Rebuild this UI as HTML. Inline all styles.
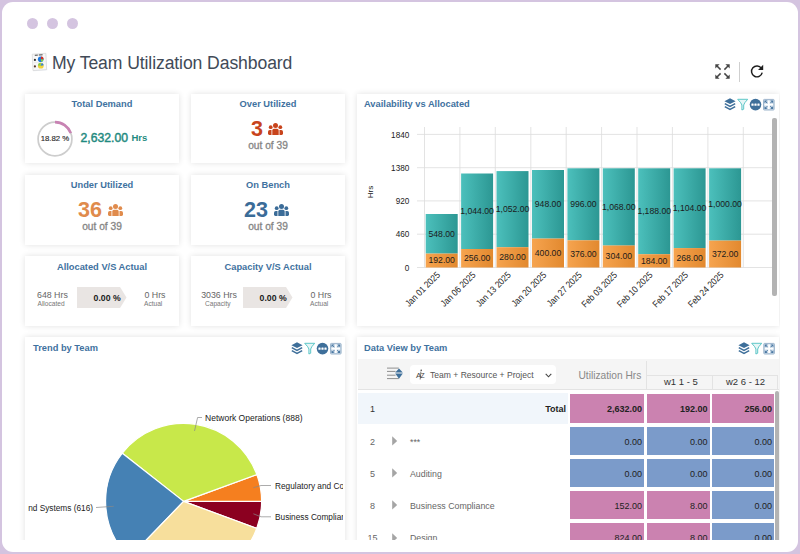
<!DOCTYPE html>
<html><head><meta charset="utf-8">
<style>
*{margin:0;padding:0;box-sizing:border-box}
html,body{width:800px;height:554px;overflow:hidden;background:#d4c4e0;font-family:"Liberation Sans",sans-serif;position:relative}
#win{position:absolute;left:2px;top:2px;width:796px;height:550px;background:#fff;border-radius:11px}
.dot{position:absolute;width:11px;height:11px;border-radius:50%;background:#d4c4e0;top:18px}
.title{position:absolute;left:52px;top:52.5px;font-size:17.6px;color:#414a57;white-space:nowrap;line-height:20px;letter-spacing:-0.1px}
.card{position:absolute;background:#fff;box-shadow:0 0 6px rgba(0,0,0,0.12)}
.ct{position:absolute;left:0;right:0;text-align:center;font-size:9.3px;font-weight:bold;color:#3f72a0;white-space:nowrap;line-height:11px}
.big{position:absolute;font-weight:bold;white-space:nowrap;line-height:1}
.outof{position:absolute;left:0;right:0;text-align:center;font-size:10.2px;color:#858585;line-height:11px;-webkit-text-stroke:0.3px #858585}
.pt{position:absolute;font-size:9.3px;font-weight:bold;color:#3f72a0;white-space:nowrap;line-height:11px}
.t{position:absolute;white-space:nowrap;line-height:1}
svg{position:absolute;overflow:visible}
</style></head><body>
<div id="win"></div>
<div class="dot" style="left:27px"></div>
<div class="dot" style="left:47px"></div>
<div class="dot" style="left:67px"></div>
<svg style="left:30px;top:52px" width="20" height="22" viewBox="30 52 20 22">
  <path d="M32.6 54.6 L46.2 53.6 L47.2 70.2 L33.4 71.2 Z" fill="#dfe6ee" opacity="0.7"/>
  <path d="M32.2 54.2 L45.8 53.3 L46.6 69.6 L33 70.6 Z" fill="#f7f7f7" stroke="#d2d2d2" stroke-width="0.6"/>
  <path d="M34.8 55.3 L37.8 55.1 M38.8 55 L42.6 54.8" stroke="#444" stroke-width="1"/>
  <path d="M33.6 62.6 L45.6 61.8" stroke="#e4e4e4" stroke-width="0.6"/>
  <circle cx="40.7" cy="59.2" r="2.8" fill="#1f7be0"/>
  <path d="M40.7 59.2 L41.2 56.45 A2.8 2.8 0 0 1 43.5 59.6 Z" fill="#e02a1a"/>
  <path d="M40.7 59.2 L43.5 59.6 A2.8 2.8 0 0 1 41.4 61.9 Z" fill="#8bd43a"/>
  <circle cx="40.8" cy="65.7" r="2.9" fill="#f3d23a"/>
  <path d="M40.8 65.7 L37.9 65.5 A2.9 2.9 0 0 1 40.6 62.8 Z" fill="#7fcf4a"/>
  <path d="M40.8 65.7 L41.6 62.9 A2.9 2.9 0 0 1 43.7 65.3 Z" fill="#2a7fe0"/>
  <circle cx="34.9" cy="59.9" r="1.1" fill="#333"/>
  <circle cx="34.9" cy="66.4" r="1.1" fill="#5a3a2a"/>
</svg>
<div class="title">My Team Utilization Dashboard</div>
<svg style="left:714.5px;top:63.5px" width="15" height="15" viewBox="0 0 15 15"><g fill="#454545" stroke="#454545">
    <path d="M0.3 0.3 L4.6 0.3 L0.3 4.6 Z" stroke="none"/><path d="M1.5 1.5 L5.6 5.6" stroke-width="1.5" fill="none"/>
    <path d="M14.7 0.3 L10.4 0.3 L14.7 4.6 Z" stroke="none"/><path d="M13.5 1.5 L9.4 5.6" stroke-width="1.5" fill="none"/>
    <path d="M0.3 14.7 L4.6 14.7 L0.3 10.4 Z" stroke="none"/><path d="M1.5 13.5 L5.6 9.4" stroke-width="1.5" fill="none"/>
    <path d="M14.7 14.7 L10.4 14.7 L14.7 10.4 Z" stroke="none"/><path d="M13.5 13.5 L9.4 9.4" stroke-width="1.5" fill="none"/></g></svg>
<div style="position:absolute;left:739px;top:62px;width:1px;height:20px;background:#cfcfcf"></div>
<svg style="left:750px;top:64px" width="14" height="14" viewBox="0 0 14 14">
  <path d="M11.4 4.4 A5.4 5.4 0 1 0 12.2 8.6" fill="none" stroke="#1e1e1e" stroke-width="1.45"/>
  <path d="M13.2 0.8 L13.2 6 L8 6 Z" fill="#1e1e1e"/></svg>
<div style="position:absolute;left:0;top:0;width:800px;height:554px;clip-path:inset(0 20px 0 0)">
<div class="card" style="left:25px;top:94px;width:154px;height:69px"></div>
<div class="ct" style="left:25px;width:154px;top:99px">Total Demand</div>
<svg style="left:37px;top:121px" width="36" height="36" viewBox="0 0 36 36">
    <circle cx="18" cy="18" r="16.9" fill="none" stroke="#cdcdcd" stroke-width="1.7"/>
    <path d="M18 1.1 A16.9 16.9 0 0 1 33.8 12.1" fill="none" stroke="#c883b3" stroke-width="2.6"/></svg>
<div class="t" style="left:37px;top:135px;width:36px;text-align:center;font-size:7.8px;color:#2a2a2a;-webkit-text-stroke:0.15px #2a2a2a">18.82 %</div>
<div class="t" style="left:80.5px;top:132px;font-size:12.2px;color:#1f8a80;-webkit-text-stroke:0.45px #1f8a80">2,632.00</div>
<div class="big" style="left:131.5px;top:132.6px;font-size:9.5px;color:#1f8a80">Hrs</div>
<div class="card" style="left:191px;top:94px;width:154px;height:69px"></div>
<div class="ct" style="left:191px;width:154px;top:99px">Over Utilized</div>
<div class="big" style="left:250.5px;top:117.1px;font-size:22.7px;color:#c8441c;transform:scaleX(0.95);transform-origin:left top">3</div>
<svg style="left:267.9px;top:123.2px" width="15" height="12" viewBox="0 0 15 12"><g fill="#c8441c"><circle cx="7.5" cy="2.5" r="2.5"/><path d="M4.3 12 L4.3 7.6 Q4.3 5.7 6 5.7 L9 5.7 Q10.7 5.7 10.7 7.6 L10.7 12 Z"/><circle cx="2.7" cy="4.2" r="1.9"/><path d="M3.5 12 L1.3 12 Q0 12 0 10.6 L0 8.6 Q0 6.9 1.8 6.9 L3.5 6.9 Z"/><circle cx="12.3" cy="4.2" r="1.9"/><path d="M11.5 12 L13.7 12 Q15 12 15 10.6 L15 8.6 Q15 6.9 13.2 6.9 L11.5 6.9 Z"/></g></svg>
<div class="outof" style="left:191px;width:154px;top:140px">out of 39</div>
<div class="card" style="left:25px;top:175px;width:154px;height:70px"></div>
<div class="ct" style="left:25px;width:154px;top:180px">Under Utilized</div>
<div class="big" style="left:78.3px;top:197.9px;font-size:22.7px;color:#e08b4c;transform:scaleX(0.95);transform-origin:left top">36</div>
<svg style="left:108px;top:204.2px" width="15" height="12" viewBox="0 0 15 12"><g fill="#e08b4c"><circle cx="7.5" cy="2.5" r="2.5"/><path d="M4.3 12 L4.3 7.6 Q4.3 5.7 6 5.7 L9 5.7 Q10.7 5.7 10.7 7.6 L10.7 12 Z"/><circle cx="2.7" cy="4.2" r="1.9"/><path d="M3.5 12 L1.3 12 Q0 12 0 10.6 L0 8.6 Q0 6.9 1.8 6.9 L3.5 6.9 Z"/><circle cx="12.3" cy="4.2" r="1.9"/><path d="M11.5 12 L13.7 12 Q15 12 15 10.6 L15 8.6 Q15 6.9 13.2 6.9 L11.5 6.9 Z"/></g></svg>
<div class="outof" style="left:25px;width:154px;top:221px">out of 39</div>
<div class="card" style="left:191px;top:175px;width:154px;height:70px"></div>
<div class="ct" style="left:191px;width:154px;top:180px">On Bench</div>
<div class="big" style="left:244.3px;top:197.9px;font-size:22.7px;color:#3b6c98;transform:scaleX(0.95);transform-origin:left top">23</div>
<svg style="left:274px;top:204.2px" width="15" height="12" viewBox="0 0 15 12"><g fill="#3b6c98"><circle cx="7.5" cy="2.5" r="2.5"/><path d="M4.3 12 L4.3 7.6 Q4.3 5.7 6 5.7 L9 5.7 Q10.7 5.7 10.7 7.6 L10.7 12 Z"/><circle cx="2.7" cy="4.2" r="1.9"/><path d="M3.5 12 L1.3 12 Q0 12 0 10.6 L0 8.6 Q0 6.9 1.8 6.9 L3.5 6.9 Z"/><circle cx="12.3" cy="4.2" r="1.9"/><path d="M11.5 12 L13.7 12 Q15 12 15 10.6 L15 8.6 Q15 6.9 13.2 6.9 L11.5 6.9 Z"/></g></svg>
<div class="outof" style="left:191px;width:154px;top:221px">out of 39</div>
<div class="card" style="left:25px;top:256px;width:154px;height:70px"></div>
<div class="ct" style="left:25px;width:154px;top:262px">Allocated V/S Actual</div>
<div class="t" style="left:37px;top:291px;font-size:8.8px;color:#666">648 Hrs</div>
<div class="t" style="left:37.5px;top:301px;font-size:6.6px;color:#777">Allocated</div>
<svg style="left:77px;top:287px" width="50" height="21" viewBox="0 0 50 21"><path d="M0 0 L43 0 L49.5 10.5 L43 21 L0 21 Z" fill="#e9e5e3"/></svg>
<div class="big" style="left:93.6px;top:293.8px;font-size:8.7px;color:#1a1a1a">0.00 %</div>
<div class="t" style="left:144.5px;top:291px;font-size:8.8px;color:#666">0 Hrs</div>
<div class="t" style="left:144px;top:301px;font-size:6.6px;color:#777">Actual</div>
<div class="card" style="left:191px;top:256px;width:154px;height:70px"></div>
<div class="ct" style="left:191px;width:154px;top:262px">Capacity V/S Actual</div>
<div class="t" style="left:201.2px;top:291px;font-size:8.8px;color:#666">3036 Hrs</div>
<div class="t" style="left:205.0px;top:301px;font-size:6.6px;color:#777">Capacity</div>
<svg style="left:243px;top:287px" width="50" height="21" viewBox="0 0 50 21"><path d="M0 0 L43 0 L49.5 10.5 L43 21 L0 21 Z" fill="#e9e5e3"/></svg>
<div class="big" style="left:259.6px;top:293.8px;font-size:8.7px;color:#1a1a1a">0.00 %</div>
<div class="t" style="left:310.5px;top:291px;font-size:8.8px;color:#666">0 Hrs</div>
<div class="t" style="left:310px;top:301px;font-size:6.6px;color:#777">Actual</div>
<div class="card" style="left:357px;top:94px;width:422px;height:232px"></div>
<div class="pt" style="left:364px;top:98.5px">Availability vs Allocated</div>
<svg style="left:724px;top:98px" width="52" height="14" viewBox="0 0 52 14"><path d="M6 0.3 L11.6 3.2 L6 6.1 L0.4 3.2 Z" fill="#3e6f9a"/><path d="M0.8 5.6 L6 8.3 L11.2 5.6" fill="none" stroke="#3e6f9a" stroke-width="1.5"/><path d="M0.8 8.6 L6 11.3 L11.2 8.6" fill="none" stroke="#3e6f9a" stroke-width="1.5"/><path d="M13.7 1.3 L23.7 1.3 Q20 5.2 19.7 7 L19.7 11.2 L17.9 12 L17.9 7 Q17.5 5.2 13.7 1.3 Z" fill="#e6f6f6" stroke="#55c3c4" stroke-width="0.95" stroke-linejoin="round"/><circle cx="31.5" cy="6.6" r="5.8" fill="#3e6f9a"/><rect x="27.4" y="5.5" width="2.2" height="2.2" rx="0.5" fill="#fff"/><rect x="30.4" y="5.5" width="2.2" height="2.2" rx="0.5" fill="#fff"/><rect x="33.4" y="5.5" width="2.2" height="2.2" rx="0.5" fill="#fff"/><g transform="translate(39,0.9)"><rect x="0.5" y="0.5" width="10.6" height="10.6" rx="0.8" fill="#cbdae8" stroke="#9db5cc" stroke-width="1"/><g fill="#4a78a2"><path d="M1.5 1.5 L4.3 1.5 L1.5 4.3 Z"/><path d="M10.1 1.5 L7.3 1.5 L10.1 4.3 Z"/><path d="M1.5 10.1 L4.3 10.1 L1.5 7.3 Z"/><path d="M10.1 10.1 L7.3 10.1 L10.1 7.3 Z"/></g><path d="M2.3 2.3 L4.4 4.4 M9.3 2.3 L7.2 4.4 M2.3 9.3 L4.4 7.2 M9.3 9.3 L7.2 7.2" stroke="#4a78a2" stroke-width="1"/><path d="M5.8 1.6 L5.8 10 M1.6 5.8 L10 5.8" stroke="#fff" stroke-width="1.8"/></g></svg>
<svg style="left:0;top:0" width="800" height="554" viewBox="0 0 800 554"><defs><linearGradient id="gt" x1="0" x2="1" y1="0" y2="0"><stop offset="0" stop-color="#4cc0bc"/><stop offset="1" stop-color="#2c9793"/></linearGradient><linearGradient id="go" x1="0" x2="1" y1="0" y2="0"><stop offset="0" stop-color="#f6a44f"/><stop offset="1" stop-color="#e2892f"/></linearGradient></defs><line x1="417" x2="774" y1="267.5" y2="267.5" stroke="#dcdcdc" stroke-width="0.8"/><text transform="translate(409.3,270.6) scale(0.9,1)" text-anchor="end" font-size="9.1" fill="#222">0</text><line x1="417" x2="774" y1="234.2" y2="234.2" stroke="#dcdcdc" stroke-width="0.8"/><text transform="translate(409.3,237.3) scale(0.9,1)" text-anchor="end" font-size="9.1" fill="#222">460</text><line x1="417" x2="774" y1="200.9" y2="200.9" stroke="#dcdcdc" stroke-width="0.8"/><text transform="translate(409.3,204.0) scale(0.9,1)" text-anchor="end" font-size="9.1" fill="#222">920</text><line x1="417" x2="774" y1="167.7" y2="167.7" stroke="#dcdcdc" stroke-width="0.8"/><text transform="translate(409.3,170.8) scale(0.9,1)" text-anchor="end" font-size="9.1" fill="#222">1380</text><line x1="417" x2="774" y1="134.4" y2="134.4" stroke="#dcdcdc" stroke-width="0.8"/><text transform="translate(409.3,137.5) scale(0.9,1)" text-anchor="end" font-size="9.1" fill="#222">1840</text><line x1="424.5" x2="424.5" y1="127" y2="267.5" stroke="#dcdcdc" stroke-width="0.8"/><line x1="459.9" x2="459.9" y1="127" y2="267.5" stroke="#dcdcdc" stroke-width="0.8"/><line x1="495.3" x2="495.3" y1="127" y2="267.5" stroke="#dcdcdc" stroke-width="0.8"/><line x1="530.8" x2="530.8" y1="127" y2="267.5" stroke="#dcdcdc" stroke-width="0.8"/><line x1="566.2" x2="566.2" y1="127" y2="267.5" stroke="#dcdcdc" stroke-width="0.8"/><line x1="601.6" x2="601.6" y1="127" y2="267.5" stroke="#dcdcdc" stroke-width="0.8"/><line x1="637.0" x2="637.0" y1="127" y2="267.5" stroke="#dcdcdc" stroke-width="0.8"/><line x1="672.4" x2="672.4" y1="127" y2="267.5" stroke="#dcdcdc" stroke-width="0.8"/><line x1="707.9" x2="707.9" y1="127" y2="267.5" stroke="#dcdcdc" stroke-width="0.8"/><line x1="743.3" x2="743.3" y1="127" y2="267.5" stroke="#dcdcdc" stroke-width="0.8"/><rect x="425.7" y="214.0" width="32" height="39.6" fill="url(#gt)"/><rect x="425.7" y="253.6" width="32" height="13.9" fill="url(#go)"/><text transform="translate(441.7,236.6) scale(0.95,1)" text-anchor="middle" font-size="9.1" fill="#1b1b1b">548.00</text><text transform="translate(441.7,263.4) scale(0.95,1)" text-anchor="middle" font-size="9.1" fill="#1b1b1b">192.00</text><text transform="translate(440.7,275.5) rotate(-45) scale(0.88,1)" text-anchor="end" font-size="9.3" fill="#222">Jan 01 2025</text><rect x="461.1" y="173.5" width="32" height="75.5" fill="url(#gt)"/><rect x="461.1" y="249.0" width="32" height="18.5" fill="url(#go)"/><text transform="translate(477.1,214.0) scale(0.95,1)" text-anchor="middle" font-size="9.1" fill="#1b1b1b">1,044.00</text><text transform="translate(477.1,261.0) scale(0.95,1)" text-anchor="middle" font-size="9.1" fill="#1b1b1b">256.00</text><text transform="translate(476.1,275.5) rotate(-45) scale(0.88,1)" text-anchor="end" font-size="9.3" fill="#222">Jan 06 2025</text><rect x="496.5" y="171.1" width="32" height="76.1" fill="url(#gt)"/><rect x="496.5" y="247.2" width="32" height="20.3" fill="url(#go)"/><text transform="translate(512.5,212.0) scale(0.95,1)" text-anchor="middle" font-size="9.1" fill="#1b1b1b">1,052.00</text><text transform="translate(512.5,260.2) scale(0.95,1)" text-anchor="middle" font-size="9.1" fill="#1b1b1b">280.00</text><text transform="translate(511.5,275.5) rotate(-45) scale(0.88,1)" text-anchor="end" font-size="9.3" fill="#222">Jan 13 2025</text><rect x="532.0" y="170.0" width="32" height="68.6" fill="url(#gt)"/><rect x="532.0" y="238.6" width="32" height="28.9" fill="url(#go)"/><text transform="translate(548.0,207.1) scale(0.95,1)" text-anchor="middle" font-size="9.1" fill="#1b1b1b">948.00</text><text transform="translate(548.0,255.8) scale(0.95,1)" text-anchor="middle" font-size="9.1" fill="#1b1b1b">400.00</text><text transform="translate(547.0,275.5) rotate(-45) scale(0.88,1)" text-anchor="end" font-size="9.3" fill="#222">Jan 20 2025</text><rect x="567.4" y="168.3" width="32" height="72.0" fill="url(#gt)"/><rect x="567.4" y="240.3" width="32" height="27.2" fill="url(#go)"/><text transform="translate(583.4,207.1) scale(0.95,1)" text-anchor="middle" font-size="9.1" fill="#1b1b1b">996.00</text><text transform="translate(583.4,256.7) scale(0.95,1)" text-anchor="middle" font-size="9.1" fill="#1b1b1b">376.00</text><text transform="translate(582.4,275.5) rotate(-45) scale(0.88,1)" text-anchor="end" font-size="9.3" fill="#222">Jan 27 2025</text><rect x="602.8" y="168.3" width="32" height="77.3" fill="url(#gt)"/><rect x="602.8" y="245.5" width="32" height="22.0" fill="url(#go)"/><text transform="translate(618.8,209.7) scale(0.95,1)" text-anchor="middle" font-size="9.1" fill="#1b1b1b">1,068.00</text><text transform="translate(618.8,259.3) scale(0.95,1)" text-anchor="middle" font-size="9.1" fill="#1b1b1b">304.00</text><text transform="translate(617.8,275.5) rotate(-45) scale(0.88,1)" text-anchor="end" font-size="9.3" fill="#222">Feb 03 2025</text><rect x="638.2" y="168.3" width="32" height="85.9" fill="url(#gt)"/><rect x="638.2" y="254.2" width="32" height="13.3" fill="url(#go)"/><text transform="translate(654.2,214.0) scale(0.95,1)" text-anchor="middle" font-size="9.1" fill="#1b1b1b">1,188.00</text><text transform="translate(654.2,263.6) scale(0.95,1)" text-anchor="middle" font-size="9.1" fill="#1b1b1b">184.00</text><text transform="translate(653.2,275.5) rotate(-45) scale(0.88,1)" text-anchor="end" font-size="9.3" fill="#222">Feb 10 2025</text><rect x="673.6" y="168.3" width="32" height="79.9" fill="url(#gt)"/><rect x="673.6" y="248.1" width="32" height="19.4" fill="url(#go)"/><text transform="translate(689.6,211.0) scale(0.95,1)" text-anchor="middle" font-size="9.1" fill="#1b1b1b">1,104.00</text><text transform="translate(689.6,260.6) scale(0.95,1)" text-anchor="middle" font-size="9.1" fill="#1b1b1b">268.00</text><text transform="translate(688.6,275.5) rotate(-45) scale(0.88,1)" text-anchor="end" font-size="9.3" fill="#222">Feb 17 2025</text><rect x="709.1" y="168.3" width="32" height="72.3" fill="url(#gt)"/><rect x="709.1" y="240.6" width="32" height="26.9" fill="url(#go)"/><text transform="translate(725.1,207.2) scale(0.95,1)" text-anchor="middle" font-size="9.1" fill="#1b1b1b">1,000.00</text><text transform="translate(725.1,256.8) scale(0.95,1)" text-anchor="middle" font-size="9.1" fill="#1b1b1b">372.00</text><text transform="translate(724.1,275.5) rotate(-45) scale(0.88,1)" text-anchor="end" font-size="9.3" fill="#222">Feb 24 2025</text><text transform="translate(373,192) rotate(-90)" text-anchor="middle" font-size="8" fill="#222">Hrs</text></svg>
<div style="position:absolute;left:772px;top:118px;width:4.5px;height:178px;background:#b3b3b3;border-radius:2px"></div>
<div style="position:absolute;left:0;top:0;width:800px;height:554px;clip-path:inset(0 0 14px 0)">
<div class="card" style="left:25px;top:337px;width:320px;height:230px"></div>
<div class="pt" style="left:33px;top:343.3px">Trend by Team</div>
<svg style="left:291px;top:342px" width="52" height="14" viewBox="0 0 52 14"><path d="M6 0.3 L11.6 3.2 L6 6.1 L0.4 3.2 Z" fill="#3e6f9a"/><path d="M0.8 5.6 L6 8.3 L11.2 5.6" fill="none" stroke="#3e6f9a" stroke-width="1.5"/><path d="M0.8 8.6 L6 11.3 L11.2 8.6" fill="none" stroke="#3e6f9a" stroke-width="1.5"/><path d="M13.7 1.3 L23.7 1.3 Q20 5.2 19.7 7 L19.7 11.2 L17.9 12 L17.9 7 Q17.5 5.2 13.7 1.3 Z" fill="#e6f6f6" stroke="#55c3c4" stroke-width="0.95" stroke-linejoin="round"/><circle cx="31.5" cy="6.6" r="5.8" fill="#3e6f9a"/><rect x="27.4" y="5.5" width="2.2" height="2.2" rx="0.5" fill="#fff"/><rect x="30.4" y="5.5" width="2.2" height="2.2" rx="0.5" fill="#fff"/><rect x="33.4" y="5.5" width="2.2" height="2.2" rx="0.5" fill="#fff"/><g transform="translate(39,0.9)"><rect x="0.5" y="0.5" width="10.6" height="10.6" rx="0.8" fill="#cbdae8" stroke="#9db5cc" stroke-width="1"/><g fill="#4a78a2"><path d="M1.5 1.5 L4.3 1.5 L1.5 4.3 Z"/><path d="M10.1 1.5 L7.3 1.5 L10.1 4.3 Z"/><path d="M1.5 10.1 L4.3 10.1 L1.5 7.3 Z"/><path d="M10.1 10.1 L7.3 10.1 L10.1 7.3 Z"/></g><path d="M2.3 2.3 L4.4 4.4 M9.3 2.3 L7.2 4.4 M2.3 9.3 L4.4 7.2 M9.3 9.3 L7.2 7.2" stroke="#4a78a2" stroke-width="1"/><path d="M5.8 1.6 L5.8 10 M1.6 5.8 L10 5.8" stroke="#fff" stroke-width="1.8"/></g></svg>
<div style="position:absolute;left:0;top:0;width:800px;height:554px;clip-path:inset(0 457px 0 28px)">
<svg style="left:0;top:0" width="800" height="554" viewBox="0 0 800 554"><path d="M183.6 501.4 L256.80 528.33 A78 78 0 0 0 261.60 501.40 Z" fill="#8b0020" stroke="#fff" stroke-width="1.2" stroke-linejoin="round"/><path d="M183.6 501.4 L261.60 501.40 A78 78 0 0 0 256.85 474.59 Z" fill="#f57f1f" stroke="#fff" stroke-width="1.2" stroke-linejoin="round"/><path d="M183.6 501.4 L256.85 474.59 A78 78 0 0 0 122.30 453.16 Z" fill="#c8e84a" stroke="#fff" stroke-width="1.2" stroke-linejoin="round"/><path d="M183.6 501.4 L122.30 453.16 A78 78 0 0 0 129.42 557.51 Z" fill="#4581b4" stroke="#fff" stroke-width="1.2" stroke-linejoin="round"/><path d="M183.6 501.4 L129.42 557.51 A78 78 0 0 0 256.80 528.33 Z" fill="#f7df9c" stroke="#fff" stroke-width="1.2" stroke-linejoin="round"/><path d="M194.5 431 L197.6 417.5 L202 417.5" fill="none" stroke="#888" stroke-width="0.7"/><path d="M253.4 487.7 L261 485.5 L271 485.5" fill="none" stroke="#888" stroke-width="0.7"/><path d="M253.4 513.8 L261 516.8 L271 516.8" fill="none" stroke="#888" stroke-width="0.7"/><path d="M113.7 506.3 L96 507.5" fill="none" stroke="#888" stroke-width="0.7"/><g font-size="9.2" fill="#222"><text x="205" y="421.3" textLength="97.5" lengthAdjust="spacingAndGlyphs">Network Operations (888)</text><text transform="translate(275,488.6) scale(0.9,1)">Regulatory and Compliance (144)</text><text transform="translate(275,520.2) scale(0.9,1)">Business Compliance (152)</text><text transform="translate(93,510.7) scale(0.9,1)" text-anchor="end">Backend Systems (616)</text></g></svg>
</div>
<div class="card" style="left:357px;top:337px;width:422px;height:230px"></div>
<div class="pt" style="left:364px;top:343.3px">Data View by Team</div>
<svg style="left:738.3px;top:342px" width="52" height="14" viewBox="0 0 52 14"><path d="M6 0.3 L11.6 3.2 L6 6.1 L0.4 3.2 Z" fill="#3e6f9a"/><path d="M0.8 5.6 L6 8.3 L11.2 5.6" fill="none" stroke="#3e6f9a" stroke-width="1.5"/><path d="M0.8 8.6 L6 11.3 L11.2 8.6" fill="none" stroke="#3e6f9a" stroke-width="1.5"/><path d="M13.7 1.3 L23.7 1.3 Q20 5.2 19.7 7 L19.7 11.2 L17.9 12 L17.9 7 Q17.5 5.2 13.7 1.3 Z" fill="#e6f6f6" stroke="#55c3c4" stroke-width="0.95" stroke-linejoin="round"/><g transform="translate(25.3,0.9)"><rect x="0.5" y="0.5" width="10.6" height="10.6" rx="0.8" fill="#cbdae8" stroke="#9db5cc" stroke-width="1"/><g fill="#4a78a2"><path d="M1.5 1.5 L4.3 1.5 L1.5 4.3 Z"/><path d="M10.1 1.5 L7.3 1.5 L10.1 4.3 Z"/><path d="M1.5 10.1 L4.3 10.1 L1.5 7.3 Z"/><path d="M10.1 10.1 L7.3 10.1 L10.1 7.3 Z"/></g><path d="M2.3 2.3 L4.4 4.4 M9.3 2.3 L7.2 4.4 M2.3 9.3 L4.4 7.2 M9.3 9.3 L7.2 7.2" stroke="#4a78a2" stroke-width="1"/><path d="M5.8 1.6 L5.8 10 M1.6 5.8 L10 5.8" stroke="#fff" stroke-width="1.8"/></g></svg>
<div style="position:absolute;left:358px;top:359px;width:421px;height:31px;background:#f5f5f5;border-bottom:1px solid #e3e3e3"></div>
<div style="position:absolute;left:646px;top:361px;width:1px;height:29px;background:#e3e3e3"></div>
<div style="position:absolute;left:647px;top:375px;width:130px;height:1px;background:#e3e3e3"></div>
<div style="position:absolute;left:712px;top:375px;width:1px;height:15px;background:#e3e3e3"></div>
<div style="position:absolute;left:777px;top:375px;width:1px;height:15px;background:#e3e3e3"></div>
<svg style="left:386px;top:367px" width="18" height="13" viewBox="0 0 18 13"><path d="M1 1.1 H12.8 M1 4.4 H9.5 M1 8.2 H9.5 M1 11.6 H12.8" stroke="#8f8f8f" stroke-width="1"/><path d="M13 1.6 L16.8 5.6 L9.2 5.6 Z" fill="#3e6f9a"/><path d="M13 11.8 L16.8 6.5 L9.2 6.5 Z" fill="#3e6f9a"/></svg>
<div style="position:absolute;left:409.5px;top:365px;width:146.5px;height:19px;background:#fff;border-radius:4px"></div>
<svg style="left:416px;top:369px" width="10" height="11" viewBox="0 0 10 11"><text x="0" y="9" font-size="8" fill="#444">A</text><text x="4.6" y="9" font-size="6.8" fill="#444">Z</text><path d="M4.9 2.5 L4.2 10.5" stroke="#444" stroke-width="0.7"/><circle cx="5.2" cy="1.2" r="0.8" fill="#444"/></svg>
<div class="t" style="left:430px;top:371px;font-size:8.55px;color:#555">Team + Resource + Project</div>
<svg style="left:545px;top:373px" width="7" height="5" viewBox="0 0 7 5"><path d="M0.7 0.8 L3.5 3.8 L6.3 0.8" fill="none" stroke="#444" stroke-width="1.1"/></svg>
<div class="t" style="left:578.5px;top:371px;font-size:10.2px;color:#888">Utilization Hrs</div>
<div class="t" style="left:664px;top:377.2px;font-size:9.5px;color:#333">w1 1 - 5</div>
<div class="t" style="left:726px;top:377.2px;font-size:9.5px;color:#333">w2 6 - 12</div>
<div style="position:absolute;left:358px;top:392.8px;width:210px;height:31.5px;background:#f1f6fb"></div>
<div class="t" style="left:362.5px;width:20px;text-align:center;top:405.4px;font-size:9px;color:#333">1</div>
<div class="t" style="left:520px;width:46px;text-align:right;top:405.4px;font-size:9px;font-weight:bold;color:#222">Total</div>
<div style="position:absolute;left:569.5px;top:394.3px;width:74.5px;height:28.3px;background:#cb82b0"></div>
<div class="t" style="left:569.5px;width:72.5px;text-align:right;top:405.4px;font-size:9px;color:#222;font-weight:bold">2,632.00</div>
<div style="position:absolute;left:647px;top:394.3px;width:62.5px;height:28.3px;background:#cb82b0"></div>
<div class="t" style="left:647px;width:60.5px;text-align:right;top:405.4px;font-size:9px;color:#222;font-weight:bold">192.00</div>
<div style="position:absolute;left:712px;top:394.3px;width:62px;height:28.3px;background:#cb82b0"></div>
<div class="t" style="left:712px;width:60px;text-align:right;top:405.4px;font-size:9px;color:#222;font-weight:bold">256.00</div>
<div class="t" style="left:362.5px;width:20px;text-align:center;top:437.7px;font-size:9px;color:#666">2</div>
<svg style="left:391.5px;top:435.8px" width="6" height="10" viewBox="0 0 6 10"><path d="M0.2 0.2 L5.2 4.9 L0.2 9.6 Z" fill="#a5a5a5"/></svg>
<div class="t" style="left:410px;top:437.7px;font-size:8.8px;color:#666">***</div>
<div style="position:absolute;left:569.5px;top:426.6px;width:74.5px;height:28.3px;background:#7b9bca"></div>
<div class="t" style="left:569.5px;width:72.5px;text-align:right;top:437.7px;font-size:9px;color:#222;">0.00</div>
<div style="position:absolute;left:647px;top:426.6px;width:62.5px;height:28.3px;background:#7b9bca"></div>
<div class="t" style="left:647px;width:60.5px;text-align:right;top:437.7px;font-size:9px;color:#222;">0.00</div>
<div style="position:absolute;left:712px;top:426.6px;width:62px;height:28.3px;background:#7b9bca"></div>
<div class="t" style="left:712px;width:60px;text-align:right;top:437.7px;font-size:9px;color:#222;">0.00</div>
<div class="t" style="left:362.5px;width:20px;text-align:center;top:469.9px;font-size:9px;color:#666">5</div>
<svg style="left:391.5px;top:468.0px" width="6" height="10" viewBox="0 0 6 10"><path d="M0.2 0.2 L5.2 4.9 L0.2 9.6 Z" fill="#a5a5a5"/></svg>
<div class="t" style="left:410px;top:469.9px;font-size:8.8px;color:#666">Auditing</div>
<div style="position:absolute;left:569.5px;top:458.8px;width:74.5px;height:28.3px;background:#7b9bca"></div>
<div class="t" style="left:569.5px;width:72.5px;text-align:right;top:469.9px;font-size:9px;color:#222;">0.00</div>
<div style="position:absolute;left:647px;top:458.8px;width:62.5px;height:28.3px;background:#7b9bca"></div>
<div class="t" style="left:647px;width:60.5px;text-align:right;top:469.9px;font-size:9px;color:#222;">0.00</div>
<div style="position:absolute;left:712px;top:458.8px;width:62px;height:28.3px;background:#7b9bca"></div>
<div class="t" style="left:712px;width:60px;text-align:right;top:469.9px;font-size:9px;color:#222;">0.00</div>
<div class="t" style="left:362.5px;width:20px;text-align:center;top:502.2px;font-size:9px;color:#666">8</div>
<svg style="left:391.5px;top:500.3px" width="6" height="10" viewBox="0 0 6 10"><path d="M0.2 0.2 L5.2 4.9 L0.2 9.6 Z" fill="#a5a5a5"/></svg>
<div class="t" style="left:410px;top:502.2px;font-size:8.8px;color:#666">Business Compliance</div>
<div style="position:absolute;left:569.5px;top:491.1px;width:74.5px;height:28.3px;background:#cb82b0"></div>
<div class="t" style="left:569.5px;width:72.5px;text-align:right;top:502.2px;font-size:9px;color:#222;">152.00</div>
<div style="position:absolute;left:647px;top:491.1px;width:62.5px;height:28.3px;background:#cb82b0"></div>
<div class="t" style="left:647px;width:60.5px;text-align:right;top:502.2px;font-size:9px;color:#222;">8.00</div>
<div style="position:absolute;left:712px;top:491.1px;width:62px;height:28.3px;background:#7b9bca"></div>
<div class="t" style="left:712px;width:60px;text-align:right;top:502.2px;font-size:9px;color:#222;">0.00</div>
<div class="t" style="left:362.5px;width:20px;text-align:center;top:534.4px;font-size:9px;color:#666">15</div>
<svg style="left:391.5px;top:532.5px" width="6" height="10" viewBox="0 0 6 10"><path d="M0.2 0.2 L5.2 4.9 L0.2 9.6 Z" fill="#a5a5a5"/></svg>
<div class="t" style="left:410px;top:534.4px;font-size:8.8px;color:#666">Design</div>
<div style="position:absolute;left:569.5px;top:523.3px;width:74.5px;height:28.3px;background:#cb82b0"></div>
<div class="t" style="left:569.5px;width:72.5px;text-align:right;top:534.4px;font-size:9px;color:#222;">824.00</div>
<div style="position:absolute;left:647px;top:523.3px;width:62.5px;height:28.3px;background:#cb82b0"></div>
<div class="t" style="left:647px;width:60.5px;text-align:right;top:534.4px;font-size:9px;color:#222;">8.00</div>
<div style="position:absolute;left:712px;top:523.3px;width:62px;height:28.3px;background:#7b9bca"></div>
<div class="t" style="left:712px;width:60px;text-align:right;top:534.4px;font-size:9px;color:#222;">0.00</div>
<div style="position:absolute;left:774.5px;top:391px;width:4.5px;height:160px;background:#b3b3b3;border-radius:2px"></div>
</div>
</div>
</body></html>
